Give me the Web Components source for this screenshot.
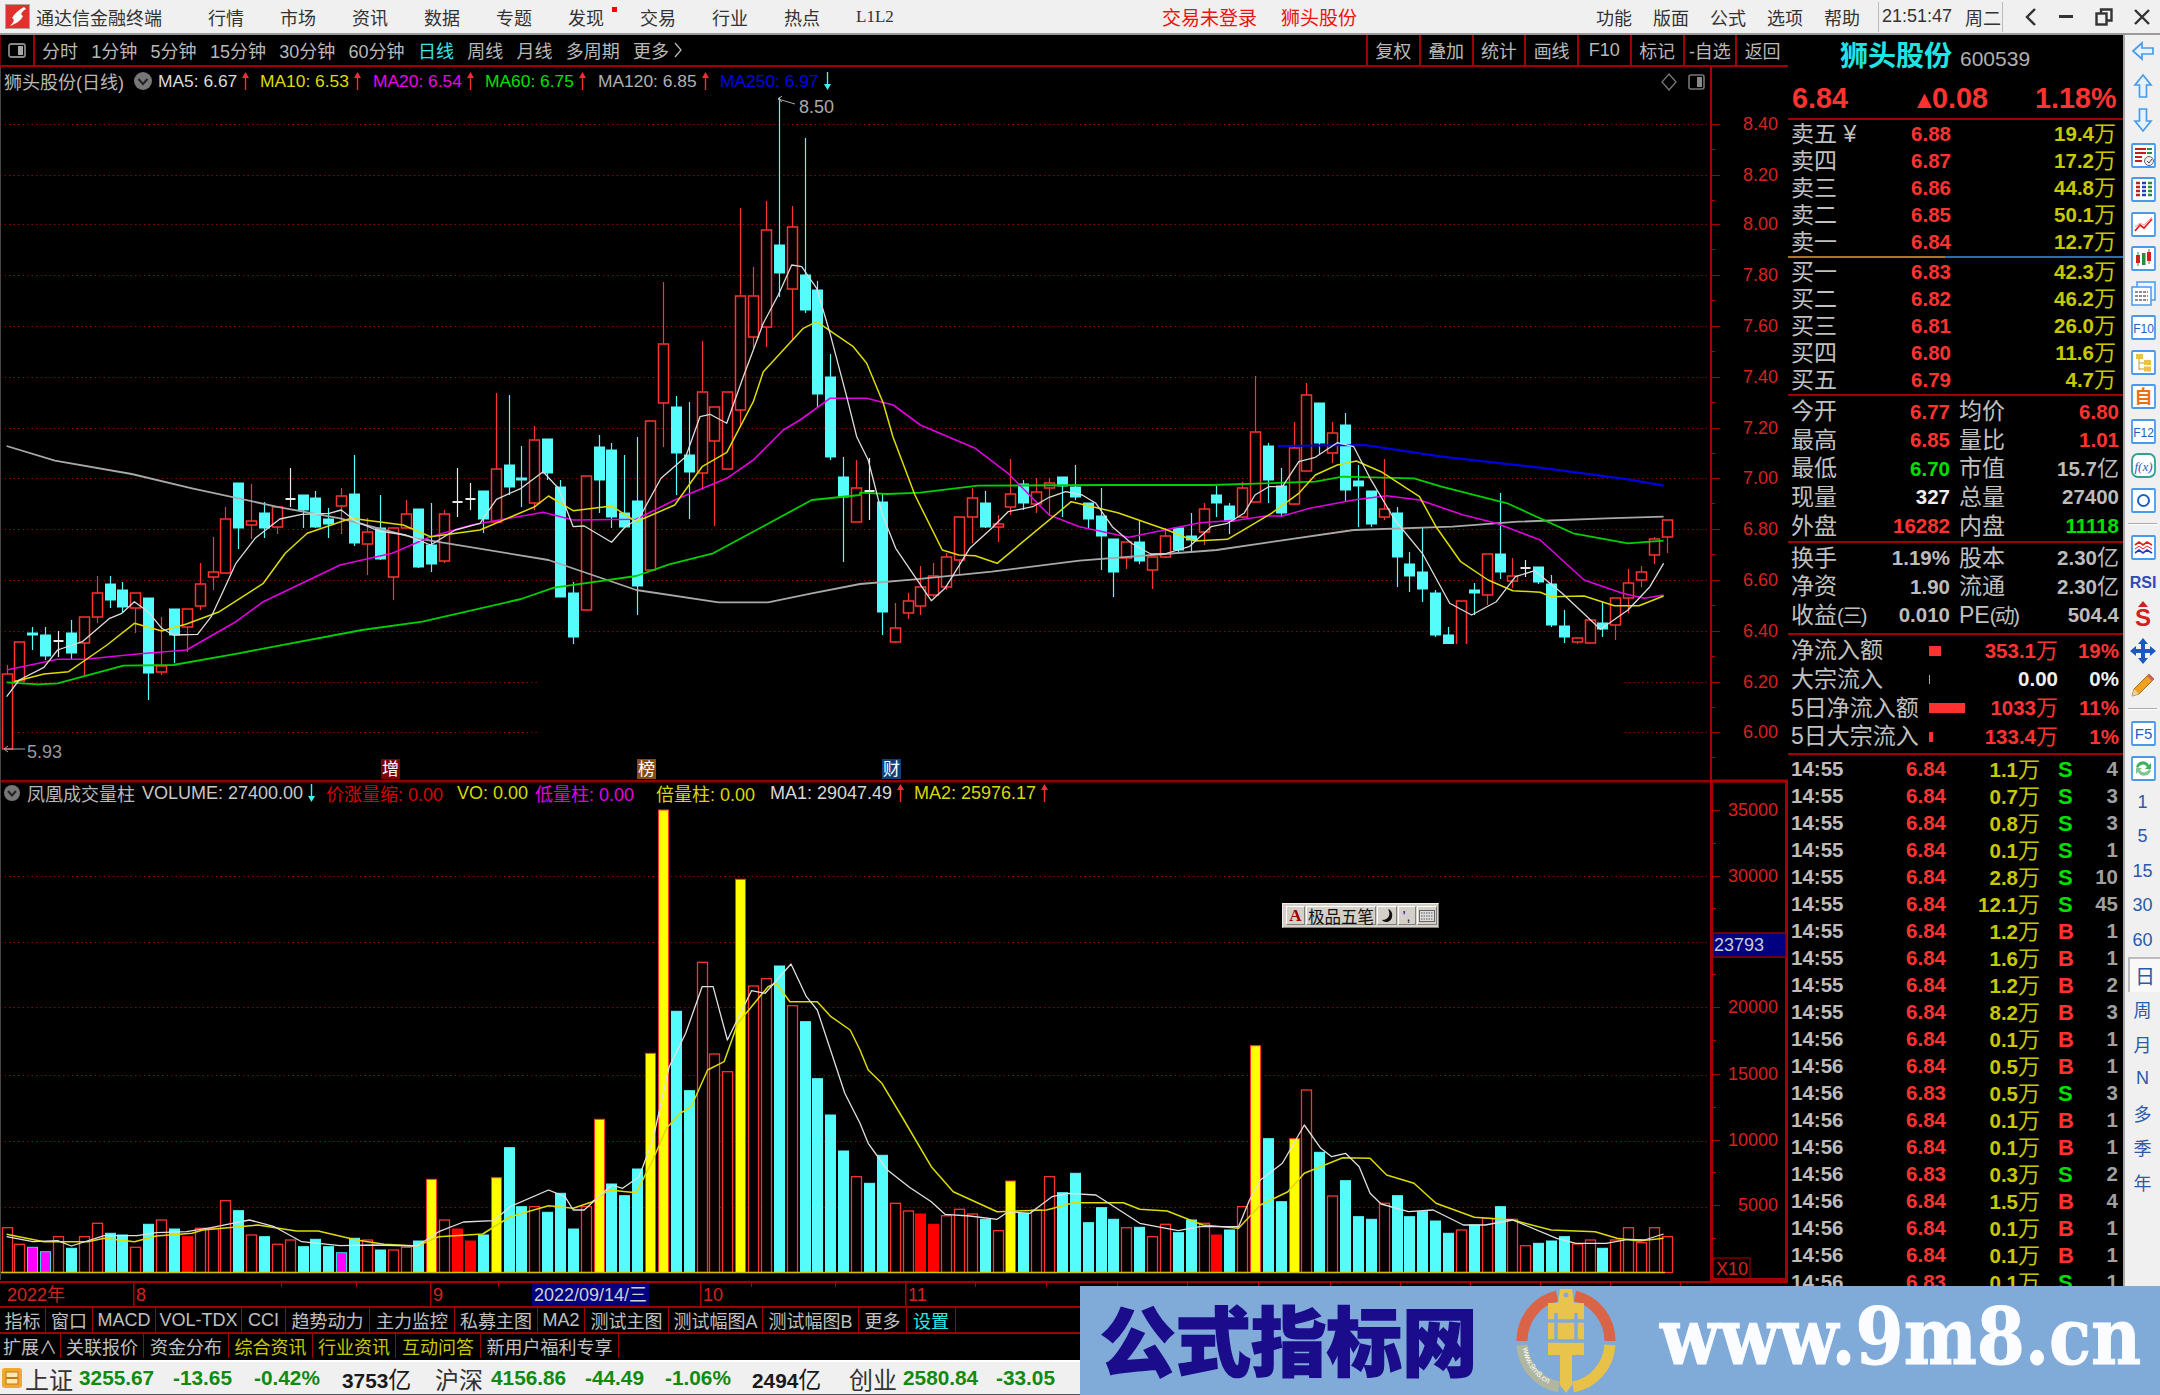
<!DOCTYPE html>
<html lang="zh"><head><meta charset="utf-8"><title>通达信金融终端</title>
<style>
html,body{margin:0;padding:0;background:#000;width:2160px;height:1395px;overflow:hidden;font-family:"Liberation Sans","Noto Sans CJK SC",sans-serif}
.shell{display:flex;flex-direction:column;width:2160px;height:1395px;position:relative}
.main{display:flex;height:1325px}
.left{display:flex;flex-direction:column;width:1788px}
</style></head><body>
<div class="shell">
<tdx-titlebar></tdx-titlebar>
<div class="main">
 <div class="left">
  <tdx-toolbar></tdx-toolbar>
  <kline-chart></kline-chart>
  <tab-bar>
   <tab-item w="46">指标</tab-item><tab-item w="47">窗口</tab-item><tab-item w="63">MACD</tab-item><tab-item w="86">VOL-TDX</tab-item><tab-item w="44">CCI</tab-item><tab-item w="84">趋势动力</tab-item><tab-item w="85">主力监控</tab-item><tab-item w="83">私募主图</tab-item><tab-item w="47">MA2</tab-item><tab-item w="84">测试主图</tab-item><tab-item w="94">测试幅图A</tab-item><tab-item w="96">测试幅图B</tab-item><tab-item w="48">更多</tab-item><tab-item w="49" tone="c">设置</tab-item>
  </tab-bar>
  <tab-bar>
   <tab-item w="61">扩展∧</tab-item><tab-item w="83">关联报价</tab-item><tab-item w="85">资金分布</tab-item><tab-item w="84" tone="y">综合资讯</tab-item><tab-item w="83" tone="y">行业资讯</tab-item><tab-item w="85" tone="y">互动问答</tab-item><tab-item w="138">新用户福利专享</tab-item>
  </tab-bar>
 </div>
 <quote-panel></quote-panel>
 <side-tools></side-tools>
</div>
<status-bar></status-bar>
<ime-bar></ime-bar>
<wm-banner></wm-banner>
</div>
<script>
const FF='"Liberation Sans","Noto Sans CJK SC",sans-serif';
function shadow(el,html){el.attachShadow({mode:'open'}).innerHTML=html;}

/* ---------- title bar ---------- */
customElements.define('tdx-titlebar',class extends HTMLElement{constructor(){super();
const nav=['行情','市场','资讯','数据','专题','发现','交易','行业','热点'].map(t=>`<span class="n">${t}${t=='发现'?'<i></i>':''}</span>`).join('');
const right=['功能','版面','公式','选项','帮助'].map(t=>`<span class="r">${t}</span>`).join('');
shadow(this,`<style>
:host{display:flex;align-items:center;box-sizing:border-box;height:35px;background:#f0f0f0;border-bottom:2px solid #9a9a9a;color:#333;font:18px ${FF};white-space:nowrap}
.logo{margin-left:5px;width:25px;height:25px;flex:none}
.title{margin-left:6px;width:172px;color:#333}
.n{width:72px;position:relative;flex:none}
.n i{position:absolute;left:44px;top:3px;width:5px;height:5px;background:#f00}
.l{font:17px "Liberation Serif",serif;width:72px}
.alert{color:#f01010;font-size:19px;flex:none}
.r{width:57px;flex:none}
.clock{flex:none;width:125px;box-sizing:border-box;height:30px;display:flex;align-items:center;border-left:1px solid #bbb;border-right:1px solid #bbb;margin-left:-3px;padding-left:3px;font-size:18px;color:#333}
.clock b{font-weight:400;margin-left:13px}
.win{display:flex;flex:none;width:157px;align-items:center;height:30px}
.win span{flex:none;display:flex;justify-content:center}
</style>
<svg class="logo" viewBox="0 0 25 25"><rect width="25" height="25" rx="1" fill="#e2302c"/><rect x=".5" y=".5" width="24" height="24" fill="none" stroke="#b0a0a0"/><path d="M19 3 L21 5 C16 8 15 11 18 12 C16 17 10 20 5 22 C9 18 10 15 7 14 C10 9 14 6 19 3Z" fill="#fff"/></svg>
<span class="title">通达信金融终端</span>${nav}<span class="n l">L1L2</span>
<span class="alert" style="margin-left:234px">交易未登录</span><span class="alert" style="margin-left:24px">狮头股份</span>
<span style="flex:1"></span>${right}
<span class="clock">21:51:47<b>周二</b></span>
<span class="win">
<span style="width:56px"><svg width="14" height="20" viewBox="0 0 14 20"><path d="M11 2 3 10l8 8" fill="none" stroke="#333" stroke-width="2.4"/></svg></span>
<span style="width:14px"><svg width="14" height="4"><rect width="14" height="3" fill="#333"/></svg></span>
<span style="width:62px"><svg width="18" height="18" viewBox="0 0 18 18" fill="none" stroke="#333" stroke-width="2.4"><rect x="1.5" y="5.5" width="10" height="11"/><path d="M6 5V1.5h10.500v11H12"/></svg></span>
<span style="width:14px"><svg width="16" height="16" viewBox="0 0 16 16" style="flex:none"><path d="M1 1l14 14M15 1 1 15" stroke="#333" stroke-width="2.400"/></svg></span>
</span>`);}});

/* ---------- toolbar ---------- */
customElements.define('tdx-toolbar',class extends HTMLElement{constructor(){super();
const left=['分时','1分钟','5分钟','15分钟','30分钟','60分钟','日线','周线','月线','多周期','更多'].map(t=>`<span class="${t=='日线'?'on':''}">${t}</span>`).join('');
const right=['复权','叠加','统计','画线','F10','标记','-自选','返回'].map(t=>`<span class="b">${t}</span>`).join('');
shadow(this,`<style>
:host{display:flex;align-items:stretch;box-sizing:border-box;height:32px;background:#000;border-bottom:2px solid #a00000;color:#b8b8b8;font:18px ${FF};white-space:nowrap}
.ic{width:35px;box-sizing:border-box;border-right:2px solid #a00000;border-left:1px solid #700;display:flex;align-items:center;justify-content:center;flex:none}
.l{display:flex;gap:13.300px;align-items:center;margin-left:7px}
.on{color:#30e8e8}
.b{width:52.750px;flex:none;box-sizing:border-box;border-left:2px solid #a00000;display:flex;align-items:center;justify-content:center}
.sp{flex:1}
</style>
<span class="ic"><svg width="18" height="15" viewBox="0 0 18 15"><rect x="1" y="1" width="16" height="13" rx="2" fill="none" stroke="#888" stroke-width="1.800"/><rect x="10" y="3" width="5" height="9" fill="#aaa"/></svg></span>
<span class="l">${left}<svg width="9" height="16" viewBox="0 0 9 16" style="margin-left:-8px"><path d="M1 1l6 7-6 7" fill="none" stroke="#b8b8b8" stroke-width="1.300"/></svg></span>
<span class="sp"></span>${right}`);}});

/* ---------- legend item ---------- */
customElements.define('legend-item',class extends HTMLElement{constructor(){super();
const a=this.getAttribute('arrow');const w=this.getAttribute('w');
if(w)this.style.width=w+'px';
const svg=a=='up'?`<svg width="9" height="18" viewBox="0 0 9 18"><path d="M4.500 0 8 6H5.200v12H3.800V6H1z" fill="#f03030"/></svg>`:a=='down'?`<svg width="9" height="18" viewBox="0 0 9 18"><path d="M3.800 0h1.400v12H8l-3.500 6L1 12h2.800z" fill="#40f0f0"/></svg>`:'';
shadow(this,`<style>:host{display:inline-flex;flex:none;align-items:center;gap:4px;white-space:nowrap;box-sizing:border-box}</style><slot></slot>${svg}`);}});

/* ---------- chart ---------- */
const C=[['r',665,674,749,749],['r',642,642,681,681],['c',627,633,635,650],['c',627,635,656,660],['w',631,640,642,657],['c',620,633,653,659],['r',617,617,643,675],['r',576,593,617,623],['c',576,584,600,608],['c',582,590,607,613],['r',593,593,608,633],['c',598,598,673,700],['r',617,666,672,675],['c',609,609,635,663],['r',609,609,627,652],['r',563,584,606,610],['r',537,572,577,590],['r',507,519,573,573],['c',483,483,528,549],['r',484,521,525,539],['c',502,513,528,538],['r',507,507,527,534],['w',468,498,500,507],['c',495,495,510,528],['c',491,498,527,528],['c',508,519,524,538],['r',488,496,506,534],['c',455,494,543,546],['r',518,532,544,575],['c',495,528,559,560],['r',528,528,577,600],['r',500,514,528,528],['c',509,509,567,568],['c',503,545,564,572],['r',510,514,561,563],['w',468,501,503,517],['w',483,498,500,510],['c',491,491,519,533],['r',393,469,522,522],['c',395,465,487,495],['c',446,478,480,507],['r',426,440,503,510],['c',439,439,473,480],['c',480,487,597,597],['c',582,593,637,644],['r',476,476,610,610],['c',435,447,480,513],['c',443,450,517,528],['c',455,513,527,528],['c',437,501,586,615],['r',421,421,570,570],['r',282,344,403,447],['c',396,407,453,495],['c',402,455,472,519],['r',341,392,473,490],['r',407,407,441,526],['r',392,392,469,469],['r',208,296,410,425],['r',267,296,337,348],['r',201,230,327,347],['c',97,245,273,297],['r',206,227,289,340],['c',138,275,310,313],['c',281,290,394,408],['c',354,377,457,460],['c',457,477,497,562],['r',460,488,522,522],['w',458,490,492,520],['c',493,502,612,635],['r',603,628,642,643],['r',593,601,613,619],['r',566,587,606,615],['r',563,576,595,597],['r',553,557,587,590],['r',517,517,560,575],['r',488,498,517,543],['c',491,503,527,528],['r',515,524,527,542],['r',459,494,507,515],['c',480,484,503,510],['r',478,492,504,513],['r',478,483,488,515],['c',477,477,486,517],['c',465,487,497,500],['c',503,503,519,528],['c',488,516,536,570],['c',539,539,572,597],['r',542,542,558,569],['c',520,542,561,564],['r',557,557,570,589],['r',528,536,557,558],['c',528,528,550,553],['c',513,536,540,552],['r',503,509,532,545],['c',486,495,503,517],['c',503,506,521,534],['r',482,488,517,518],['r',376,432,502,502],['c',443,446,480,503],['c',468,486,513,517],['r',422,448,504,505],['r',383,395,471,471],['c',403,403,443,454],['r',422,433,453,463],['c',413,425,490,501],['c',465,481,486,527],['c',491,491,524,527],['r',459,509,517,520],['c',507,513,557,587],['c',552,564,576,592],['c',528,572,589,602],['c',590,593,635,637],['c',627,635,647,647],['r',601,601,647,647],['c',583,590,593,615],['r',554,554,595,605],['c',493,554,572,579],['r',558,576,581,588],['w',560,567,569,577],['c',567,567,582,584],['c',575,584,625,627],['c',610,626,637,643],['r',637,638,642,644],['r',620,620,643,643],['c',602,623,629,637],['r',598,598,625,640],['r',569,583,598,613],['r',566,572,580,587],['r',537,539,555,564],['r',520,520,537,553]];
const V=[['r',1283],['r',1333],['m',1342],['m',1355],['r',1310],['c',1345],['r',1310],['r',1270],['c',1300],['c',1305],['r',1342],['c',1273],['r',1260],['c',1287],['R',1310],['r',1285],['r',1285],['r',1202],['c',1232],['r',1305],['c',1310],['r',1333],['r',1320],['c',1340],['c',1318],['c',1340],['m',1358],['c',1315],['r',1320],['c',1350],['r',1350],['r',1342],['c',1323],['y',1138],['r',1260],['R',1287],['R',1323],['c',1305],['y',1133],['c',1043],['c',1220],['r',1220],['c',1237],['c',1180],['c',1287],['r',1220],['y',958],['c',1152],['c',1187],['c',1107],['y',760],['y',30],['c',634],['c',872],['r',487],['r',762],['r',815],['y',238],['r',558],['r',536],['c',498],['r',617],['c',665],['c',836],['c',945],['c',1053],['r',1130]].map(([t,z])=>[t,800+z/3]).concat([['c',910],['c',826],['r',970],['r',993],['R',1002],['R',1033],['r',1007],['r',988],['r',1002],['c',1018],['r',1052],['y',903],['c',1000],['r',990],['r',890],['c',938],['c',880],['c',1028],['c',983],['c',1018],['r',1043],['c',1042],['r',1070],['r',1033],['c',1058],['c',1020],['r',1030],['R',1065],['c',1050],['r',980],['y',497],['c',776],['c',965],['y',776],['r',630],['c',817],['r',948],['c',902],['c',1010],['c',1018],['r',970],['c',947],['c',1010],['c',995],['c',1023],['c',1060],['r',1050],['c',1035],['r',1015],['c',980],['r',1018],['r',1097],['c',1090],['c',1083],['c',1070],['r',1092],['r',1080],['c',1105],['r',1080],['r',1043],['r',1088],['r',1043],['r',1070]].map(([t,z])=>[t,880+z/3]));
const map=(a,fx,fy)=>{const o=[];for(let i=0;i<a.length;i+=2)o.push([fx(a[i]),fy(a[i+1])]);return o};
const z8=a=>map(a,x=>x/1.823,y=>420+y/3), z12=a=>map(a,x=>600+x/3,y=>80+y/3), z9=a=>map(a,x=>860+x/1.823,y=>380+y/3), z10=a=>map(a,x=>x/1.823,y=>800+y/3), z11=a=>map(a,x=>860+x/1.823,y=>880+y/3);
const MA5=[...z8([12,830,35,780,80,742,105,690,150,665,200,595,222,580,245,545,270,575,295,625,316,645,360,643,385,590,405,520,430,430,465,355,510,297,550,283,600,280,622,270,650,305,690,333,740,345,785,375,830,330,875,310,905,238,950,205,990,155,1018,205,1045,320,1065,318,1115,367,1140,320,1165,295,1205,175,1250,110]),...z12([300,1010,330,1003,380,1030,430,890,490,730,535,645,575,555,605,560,650,625,690,760,740,950,770,1070]),...z9([15,240,40,400,65,505,100,590,130,662,155,625,200,505,240,445,270,395,315,380,345,352,375,335,405,345,430,370,460,440,495,490,530,522,555,522,600,500,640,440,670,430,700,400,720,345,745,320,770,320,800,245,830,232,870,188,900,200,930,295,975,420,1025,520,1075,670,1115,705,1160,665,1195,590,1230,572,1280,640,1350,748,1400,690,1440,620,1465,550])];
const MA10=[...z8([25,785,80,762,125,755,195,675,245,610,295,633,340,612,400,575,480,490,520,400,560,340,640,295,735,315,785,350,875,330,975,260,1000,228,1045,272,1115,258,1160,305,1230,255,1280,140,1325,97]),...z12([460,965,490,875,550,810,610,745,650,725,760,800,800,850,850,970]),...z9([60,170,100,345,150,510,180,525,210,527,250,550,385,365,470,398,560,450,610,483,670,478,750,400,800,340,830,285,870,255,905,243,950,275,1020,350,1050,440,1095,545,1145,600,1190,632,1240,637,1260,650,1320,648,1375,677,1420,677,1465,648])];
const MA20=[...z8([12,750,105,718,155,718,245,703,340,690,430,605,480,545,620,435,715,400,785,350,860,315,990,277,1045,300,1160,298,1230,240,1325,175]),...z12([460,1140,550,1050,600,1020,690,955,800,955,880,975]),...z9([110,135,210,205,270,280,345,405,400,440,490,472,620,428,690,420,740,408,770,408,820,385,900,360,960,347,1020,360,1100,405,1160,430,1240,480,1320,600,1390,640,1430,655,1465,645])];
const MA60=[...z8([12,787,70,793,105,790,225,737,316,735,435,700,660,630,770,605,950,537,1010,503,1160,468,1220,433,1300,400,1390,320,1480,240,1568,225]),...z9([0,338,50,342,110,338,215,317,450,315,640,315,830,305,880,290,1010,295,1060,320,1180,370,1300,460,1400,490,1465,482])];
const MA120=[...z8([12,78,100,122,240,162,350,205,510,262,620,295,760,355,1000,420,1160,510,1310,547,1400,547,1480,520,1568,492]),...z9([100,598,240,575,400,542,650,510,900,450,1080,440,1200,425,1360,415,1465,410])];
const MA250=z9([762,198,920,195,1060,230,1250,265,1400,298,1465,317]);
const VM1=[...z10([12,1310,60,1325,105,1322,130,1338,190,1307,250,1307,285,1298,340,1295,385,1283,430,1268,455,1260,500,1280,550,1325,620,1337,680,1335,760,1338,800,1295,845,1266,900,1262,930,1220,1000,1170,1030,1190,1045,1230,1065,1230,1115,1155,1135,1165,1165,1130,1190,1020,1220,800,1250,700,1280,560,1300,560,1326,720,1370,572,1395,580,1442,492,1470,590,1490,630,1540,880]),...z11([0,730,15,790,50,870,90,922,130,965,155,1003,200,1008,250,1018,270,995,310,1000,350,950,380,940,430,945,510,1030,580,1052,620,1040,690,1040,710,960,730,900,770,850,810,735,840,805,860,830,885,820,910,860,930,940,950,972,1000,995,1045,990,1100,1035,1140,1035,1190,1020,1270,1075,1305,1090,1360,1090,1400,1078,1430,1080,1465,1062])];
const VM2=[...z10([12,1303,80,1325,160,1325,190,1315,245,1325,285,1308,350,1300,370,1290,470,1275,540,1293,580,1293,650,1320,700,1333,760,1338,800,1310,880,1302,930,1250,1000,1217,1045,1225,1080,1205,1110,1170,1160,1178,1190,1080,1215,985,1240,940,1260,920,1290,810,1320,785,1345,670,1400,560,1415,550,1440,605,1490,605,1515,650,1550,690]),...z11([0,510,15,570,40,610,80,720,130,860,170,935,250,995,340,990,390,968,480,968,510,988,560,993,625,1035,690,1045,730,975,780,935,810,880,880,833,930,835,960,885,1010,910,1050,970,1120,1012,1190,1020,1260,1050,1340,1055,1380,1075,1420,1083,1465,1075])];
const CY='#54fcfc',RD='#ff3232';
const cx=i=>Math.round(6.6+12.87*i)+.5;
function buildChart(){
 let s='';
 const AX='#a80000',DOT='#8a0000';
 const pg=[124,175,224,275,326,377,428,478,529,580,631,682,732];
 const pl=['8.40','8.20','8.00','7.80','7.60','7.40','7.20','7.00','6.80','6.60','6.40','6.20','6.00'];
 pg.forEach(y=>s+=`<line x1="0" x2="1711" y1="${y}.5" y2="${y}.5" stroke="${DOT}" stroke-dasharray="1.500 3"/>`);
 const vg=[876,942,1007,1075,1141,1207];
 vg.forEach(y=>s+=`<line x1="0" x2="1711" y1="${y}.5" y2="${y}.5" stroke="${DOT}" stroke-dasharray="1.500 3"/>`);
 C.forEach((c,i)=>{const x=cx(i),[t,wt,bt,bb,wb]=c;
  const col=t=='c'?CY:t=='r'?RD:'#e8e8e8';
  s+=`<line x1="${x}" x2="${x}" y1="${wt}" y2="${wb}" stroke="${col}" stroke-width="1.200"/>`;
  if(t=='w')s+=`<line x1="${x-5}" x2="${x+5}" y1="${(bt+bb)/2}" y2="${(bt+bb)/2}" stroke="${col}" stroke-width="2"/>`;
  else s+=`<rect x="${x-5}" y="${bt}" width="10" height="${Math.max(bb-bt,1)}" fill="${t=='c'?CY:'#000'}" stroke="${col}" stroke-width="${t=='c'?1:1.500}"/>`;
 });
 const line=(p,c,w)=>`<polyline points="${p.map(q=>q[0].toFixed(1)+','+q[1].toFixed(1)).join(' ')}" fill="none" stroke="${c}" stroke-width="${w}" stroke-linejoin="round"/>`;
 s+=line(MA120,'#a8a8a8',1.800)+line(MA250,'#0000e0',2.200)+line(MA60,'#00d000',1.800)+line(MA20,'#e000e0',1.600)+line(MA10,'#dcdc00',1.500)+line(MA5,'#dcdcdc',1.300);
 s+=`<rect x="537" y="644" width="1084" height="134" fill="#000"/>`;
 s+=`<path d="M778 99l17 5M778 99l4 -3M778 99l4 3" stroke="#aaa" fill="none"/><text x="799" y="107" fill="#aaa" font-size="18" dominant-baseline="central">8.50</text>`;
 s+=`<path d="M25 749H4M4 749l4-3M4 749l4 3" stroke="#aaa" fill="none"/><text x="27" y="752" fill="#999" font-size="18" dominant-baseline="central">5.93</text>`;
 [[381,'增','#7d0000'],[637,'榜','#8a4a10'],[882,'财','#0f3f78']].forEach(([x,t,b])=>s+=`<rect x="${x}" y="759" width="19" height="20" fill="${b}"/><text x="${x+9.500}" y="769" fill="#fff" font-size="17" text-anchor="middle" dominant-baseline="central">${t}</text>`);
 s+=`<path d="M1669 74l7 8-7 8-7-8z" fill="none" stroke="#777" stroke-width="1.300"/><rect x="1689" y="75" width="15" height="14" rx="2" fill="none" stroke="#777" stroke-width="1.600"/><rect x="1697" y="77" width="5" height="10" fill="#888"/>`;
 V.forEach((b,i)=>{const x=cx(i),[t,y]=b,h=1272.5-y;
  const fill={r:'#000',c:CY,y:'#ffff00',m:'#ff00ff',R:'#ff0000'}[t];
  const st={r:RD,c:CY,y:RD,m:'#30e0e0',R:'#ff0000'}[t];
  s+=`<rect x="${x-5}" y="${y.toFixed(1)}" width="10" height="${h.toFixed(1)}" fill="${fill}" stroke="${st}" stroke-width="${t=='r'?1.300:1}"/>`;
 });
 s+=`<line x1="0" x2="1665" y1="1272.500" y2="1272.500" stroke="#d0c000" stroke-width="1.600"/>`;
 s+=line(VM2,'#dcdc00',1.500)+line(VM1,'#e0e0e0',1.300);
 s+=`<rect x="0" y="780" width="1788" height="2.500" fill="#900000"/><line x1="0.500" x2="0.500" y1="67" y2="1280" stroke="#444"/>`;
 s+=`<rect x="1710" y="67" width="2" height="1215" fill="${AX}"/>`;
 pg.forEach((y,i)=>{s+=`<rect x="1712" y="${y}" width="8" height="1" fill="${AX}"/><rect x="1712" y="${y+25}" width="3" height="1" fill="${AX}"/><text x="1778" y="${y}" fill="#d82020" font-size="18" text-anchor="end" dominant-baseline="central">${pl[i]}</text>`;});
 [[810,'35000'],[876,'30000'],[1007,'20000'],[1074,'15000'],[1140,'10000'],[1205,'5000']].forEach(([y,t])=>s+=`<rect x="1713" y="${y}" width="7" height="1" fill="${AX}"/><text x="1778" y="${y}" fill="#d82020" font-size="18" text-anchor="end" dominant-baseline="central">${t}</text>`);
 [843,908,974,1040,1107,1172,1238].forEach(y=>s+=`<rect x="1713" y="${y}" width="3" height="1" fill="${AX}"/>`);
 s+=`<rect x="1711.500" y="781" width="75" height="498.500" fill="none" stroke="${AX}" stroke-width="3"/>`;
 s+=`<rect x="1713" y="933" width="73" height="24" fill="#000080" stroke="#900000" stroke-width="1.500"/><text x="1714" y="945" fill="#ccc" font-size="18" dominant-baseline="central">23793</text>`;
 s+=`<rect x="1713" y="1258" width="37" height="21" fill="none" stroke="${AX}"/><text x="1716" y="1268.500" fill="#d82020" font-size="18" dominant-baseline="central">X10</text>`;
 s+=`<rect x="0" y="1281" width="1788" height="2" fill="${AX}"/>`;
 [133,281,356,430,498,700,751,835,905,975,1046,1117,1187,1258,1330,1400,1470,1540,1610,1680].forEach(x=>s+=`<rect x="${x}" y="1283" width="1" height="4" fill="${AX}"/>`);
 [133,430,700,905].forEach(x=>s+=`<rect x="${x}" y="1283" width="1.500" height="23" fill="${AX}"/>`);
 const dt=(x,t)=>`<text x="${x}" y="1295" fill="#d82020" font-size="18" dominant-baseline="central">${t}</text>`;
 s+=dt(7,'2022年')+dt(136,'8')+dt(433,'9')+dt(703,'10')+dt(908,'11');
 s+=`<rect x="532" y="1283" width="117" height="23" fill="#000080"/><text x="590.500" y="1295" fill="#d0d0d0" font-size="18" text-anchor="middle" dominant-baseline="central">2022/09/14/三</text>`;
 return s;
}
customElements.define('kline-chart',class extends HTMLElement{constructor(){super();
shadow(this,`<style>
:host{display:block;position:relative;width:1788px;height:1239px;flex:none;background:#000;font-family:${FF}}
svg{display:block;font-family:${FF}}
.lg{position:absolute;left:0;display:flex;align-items:center;height:18px;white-space:nowrap}
.a{top:5px;font-size:17.400px;color:#c8c8c8}
.b{top:717px;font-size:18px;color:#c8c8c8}
.ci{flex:none}
</style>
<svg width="1788" height="1239" viewBox="0 67 1788 1239">${buildChart()}</svg>
<div class="lg a"><span style="width:134px;padding-left:4px;box-sizing:border-box;color:#b8b8b8;font-size:18px">狮头股份(日线)</span>
<svg class="ci" width="24" height="18" viewBox="0 0 24 18"><circle cx="9" cy="9" r="9" fill="#777"/><path d="M4.500 7l4.500 5 4.500-5" fill="none" stroke="#222" stroke-width="2"/></svg>
<legend-item w="102" arrow="up" style="color:#dcdcdc">MA5: 6.67</legend-item>
<legend-item w="113" arrow="up" style="color:#dcdc00">MA10: 6.53</legend-item>
<legend-item w="112" arrow="up" style="color:#ee00ee">MA20: 6.54</legend-item>
<legend-item w="113" arrow="up" style="color:#00e000">MA60: 6.75</legend-item>
<legend-item w="122" arrow="up" style="color:#b0b0b0">MA120: 6.85</legend-item>
<legend-item arrow="down" style="color:#0000e8">MA250: 6.97</legend-item></div>
<div class="lg b"><svg class="ci" width="27" height="18" viewBox="0 0 27 18"><circle cx="12" cy="9" r="8" fill="#777"/><path d="M8 7l4 4.500L16 7" fill="none" stroke="#222" stroke-width="2"/></svg>
<span style="width:115px;color:#b8b8b8">凤凰成交量柱</span>
<legend-item w="184" arrow="down" style="color:#c8c8c8">VOLUME: 27400.00</legend-item>
<legend-item w="131" style="color:#d80000">价涨量缩: 0.00</legend-item>
<legend-item w="78" style="color:#d8d800">VO: 0.00</legend-item>
<legend-item w="121" style="color:#e000e0">低量柱: 0.00</legend-item>
<legend-item w="114" style="color:#d8d800">倍量柱: 0.00</legend-item>
<legend-item w="144" arrow="up" style="color:#d8d8d8">MA1: 29047.49</legend-item>
<legend-item arrow="up" style="color:#d8d800">MA2: 25976.17</legend-item></div>`);}});

/* ---------- tabs ---------- */
customElements.define('tab-bar',class extends HTMLElement{constructor(){super();
shadow(this,`<style>:host{display:flex;box-sizing:border-box;height:26px;flex:none;background:#000;border-top:2px solid #a00000;color:#c0c0c0;font:18px ${FF}}</style><slot></slot>`);}});
customElements.define('tab-item',class extends HTMLElement{constructor(){super();
this.style.width=this.getAttribute('w')+'px';
shadow(this,`<style>:host{display:flex;flex:none;box-sizing:border-box;align-items:center;justify-content:center;border-right:1.500px solid #a00000;white-space:nowrap;overflow:hidden;color:#c0c0c0}
:host([tone=y]){color:#c8c800}:host([tone=c]){color:#30e8e8}</style><slot></slot>`);}});

/* ---------- quote panel ---------- */
const wan=s=>s.replace(/([万亿])/g,'<u>$1</u>');
customElements.define('quote-panel',class extends HTMLElement{constructor(){super();
const bk=(n,p,q)=>`<div class="bk"><span class="lb">${n}</span><span class="red v">${p}</span><span class="yl v">${wan(q)}</span></div>`;
const sell=[['卖五 <s>¥</s>','6.88','19.4万'],['卖四','6.87','17.2万'],['卖三','6.86','44.8万'],['卖二','6.85','50.1万'],['卖一','6.84','12.7万']].map(a=>bk(...a)).join('');
const buy=[['买一','6.83','42.3万'],['买二','6.82','46.2万'],['买三','6.81','26.0万'],['买四','6.80','11.6万'],['买五','6.79','4.7万']].map(a=>bk(...a)).join('');
const st=(a,b,bc,c,d,dc)=>`<div class="st"><span class="lb">${a}</span><span class="v ${bc}">${wan(b)}</span><span></span><span class="lb">${c}</span><span class="v ${dc}">${wan(d)}</span></div>`;
const stats=[['今开','6.77','red','均价','6.80','red'],['最高','6.85','red','量比','1.01','red'],['最低','6.70','grn','市值','15.7亿','gy'],['现量','327','wh','总量','27400','gy'],['外盘','16282','red','内盘','11118','grn']].map(a=>st(...a)).join('');
const fin=[['换手','1.19%','gy','股本','2.30亿','gy'],['净资','1.90','gy','流通','2.30亿','gy'],['收益<small>(三)</small>','0.010','gy','PE<small>(动)</small>','504.4','gy']].map(a=>st(...a)).join('');
const fl=(a,w,h,v,c,p)=>`<div class="fl"><span class="lb">${a}</span><span><i style="width:${w}px;height:${h}px;background:${w<2?'#aaa':'#ff3030'}"></i></span><span class="v ${c}">${wan(v)}</span><span class="v ${c}">${p}</span></div>`;
const flow=[['净流入额',12,10,'353.1万','red','19%'],['大宗流入',1,9,'0.00','wh','0%'],['5日净流入额',36,10,'1033万','red','11%'],['5日大宗流入',4,10,'133.4万','red','1%']].map(a=>fl(...a)).join('');
const T=`14:55 6.84 1.1 S 4|14:55 6.84 0.7 S 3|14:55 6.84 0.8 S 3|14:55 6.84 0.1 S 1|14:55 6.84 2.8 S 10|14:55 6.84 12.1 S 45|14:55 6.84 1.2 B 1|14:55 6.84 1.6 B 1|14:55 6.84 1.2 B 2|14:55 6.84 8.2 B 3|14:56 6.84 0.1 B 1|14:56 6.84 0.5 B 1|14:56 6.83 0.5 S 3|14:56 6.84 0.1 B 1|14:56 6.84 0.1 B 1|14:56 6.83 0.3 S 2|14:56 6.84 1.5 B 4|14:56 6.84 0.1 B 1|14:56 6.84 0.1 B 1|14:56 6.83 0.1 S 1`;
const ticks=T.split('|').map(r=>{const [t,p,q,d,n]=r.split(' ');return `<div class="tk"><span class="gy">${t}</span><span class="red v">${p}</span><span class="yl v">${q}<u>万</u></span><span class="${d=='S'?'grn':'red'} bs">${d}</span><span class="v dim">${n}</span></div>`}).join('');
shadow(this,`<style>
:host{display:flex;flex-direction:column;width:335px;height:1325px;flex:none;box-sizing:border-box;background:#000;overflow:hidden;color:#c0c0c0;font:bold 20.500px/1 ${FF}}
.lb{font-weight:400;font-size:23px;color:#c0c0c0;white-space:nowrap}
.lb s{text-decoration:none;font-size:23px;font-weight:400}
.lb small{font-size:20px;font-weight:400;letter-spacing:-1.500px}
u{text-decoration:none;font-weight:400;font-size:22px}
.v{text-align:right;white-space:nowrap}
.red{color:#ff3232}.grn{color:#00e000}.yl{color:#c8c800}.gy{color:#bcbcbc}.wh{color:#f0f0f0}.dim{color:#a0a0a0}
.title{height:43px;flex:none;display:flex;align-items:center;padding-left:52px}
.title b{font-size:28px;color:#20e4e4;font-weight:700;white-space:nowrap}
.title span{font-weight:400;font-size:21px;color:#b0b0b0;margin-left:8px;margin-top:3px}
.px{height:40px;flex:none;display:grid;grid-template-columns:120px 123px 81px;padding-left:4px;align-items:center;color:#ff3232;font-size:28.800px;border-bottom:2px solid #a00000;box-sizing:content-box}
.px em{font-style:normal;font-size:25px;display:inline-block;width:20px;text-align:center}
.sec{flex:none;display:flex;flex-direction:column;padding-left:3px;box-sizing:border-box}
.bk{display:grid;grid-template-columns:120px 40px 1fr;height:27px;flex:none;align-items:center;padding-right:7px}
.l1{height:135.500px;padding-top:.5px}.d1{height:2.500px;flex:none;background:linear-gradient(90deg,#a87820 0 157px,#2870a8 157px)}
.l2{height:137.500px;padding-top:.5px;border-bottom:2px solid #a00000}
.st{display:grid;grid-template-columns:60px 99px 9px 60px 1fr;height:28.600px;flex:none;align-items:center;padding-right:4px}
.l3{height:147px;padding-top:2px;border-bottom:2px solid #a00000}
.l4{height:92.500px;padding-top:1.500px;border-bottom:2px solid #a00000}
.fl{display:grid;grid-template-columns:138px 40px 89px 61px;height:28.700px;flex:none;align-items:center}
.fl i{display:block}
.l5{height:120px;padding-top:1.500px;border-bottom:2px solid #a00000}
.tk{display:grid;grid-template-columns:60px 95px 94px 40px 38px;height:27px;flex:none;align-items:center}
.bs{padding-left:18px;font-size:22px}
</style>
<div class="title"><b>狮头股份</b><span>600539</span></div>
<div class="px"><span>6.84</span><span><em>▲</em>0.08</span><span class="v">1.18%</span></div>
<div class="sec l1">${sell}</div><div class="d1"></div>
<div class="sec l2">${buy}</div>
<div class="sec l3">${stats}</div>
<div class="sec l4">${fin}</div>
<div class="sec l5">${flow}</div>
<div class="sec" style="padding-top:1px">${ticks}</div>`);}});

/* ---------- side tools ---------- */
const FR=(inner,c='#4a9ae8')=>`<svg width="28" height="28" viewBox="0 0 28 28"><rect x="3" y="3" width="23" height="23" rx="1" fill="#fff" stroke="${c}" stroke-width="1.800"/>${inner}</svg>`;
const ICONS=[
`<svg width="24" height="20" viewBox="0 0 24 20"><path d="M2 10 11 2v5h11v6H11v5z" fill="#e6f3ff" stroke="#4a9ae8" stroke-width="1.700"/></svg>`,
`<svg width="20" height="26" viewBox="0 0 20 26"><path d="M10 2l8 10h-4.500v12h-7V12H2z" fill="#e6f3ff" stroke="#4a9ae8" stroke-width="1.700"/></svg>`,
`<svg width="20" height="26" viewBox="0 0 20 26"><path d="M10 24l8-10h-4.500V2h-7v12H2z" fill="#e6f3ff" stroke="#4a9ae8" stroke-width="1.700"/></svg>`,
FR(`<path d="M6 8h11M6 12h11M6 16h7M6 20h7" stroke="#c02020" stroke-width="2"/><path d="M18 8h5M18 12h5" stroke="#209040" stroke-width="2"/><circle cx="20" cy="20" r="4.500" fill="#eee" stroke="#666"/><path d="M18 20l2 2 3-4" stroke="#444" fill="none"/>`),
FR(`<path d="M7 8h4M7 12h4M7 16h4M7 20h4" stroke="#c02020" stroke-width="2.400"/><path d="M13 8h4M13 12h4M13 16h4M13 20h4" stroke="#2040c0" stroke-width="2.400"/><path d="M19 8h4M19 12h4M19 16h4M19 20h4" stroke="#209040" stroke-width="2.400"/>`),
FR(`<path d="M6 21l5-6 4 3 8-9" stroke="#e02020" stroke-width="1.800" fill="none"/><path d="M6 17l5-4 4 2 8-8" stroke="#e8a0a0" fill="none"/>`),
FR(`<path d="M9 8v14M20 5v15" stroke="#209040"/><rect x="7" y="11" width="4" height="8" fill="#d02020"/><rect x="13" y="9" width="3.500" height="12" fill="#209040"/><rect x="18" y="8" width="4" height="9" fill="#d02020"/>`),
`<svg width="28" height="28" viewBox="0 0 28 28"><rect x="8" y="3" width="18" height="18" fill="#eef5ff" stroke="#4a9ae8" stroke-width="1.500"/><rect x="3" y="8" width="19" height="18" fill="#fff" stroke="#4a9ae8" stroke-width="1.500"/><path d="M6 13h13M6 17h13M6 21h13" stroke="#667" stroke-dasharray="3 1" stroke-width="1.500"/></svg>`,
FR(`<text x="14.500" y="19.500" text-anchor="middle" font-size="12" fill="#2060c0" font-family="Liberation Sans">F10</text>`),
FR(`<path d="M10 9v13M10 15h6M10 21h6" stroke="#c0a030" fill="none"/><rect x="7" y="6" width="7" height="5" fill="#f0c040"/><rect x="15" y="12" width="7" height="5" fill="#f0c040"/><rect x="15" y="18.500" width="7" height="5" fill="#f0c040"/>`),
FR(`<text x="14.500" y="21" text-anchor="middle" font-size="18" font-weight="700" fill="#f07010">自</text>`),
FR(`<text x="14.500" y="19.500" text-anchor="middle" font-size="12" fill="#2060c0" font-family="Liberation Sans">F12</text>`),
`<svg width="28" height="28" viewBox="0 0 28 28"><rect x="3" y="3" width="23" height="23" rx="6" fill="#fff" stroke="#30a090" stroke-width="1.800"/><text x="14.500" y="19.500" text-anchor="middle" font-size="13" font-style="italic" fill="#2060c0" font-family="Liberation Serif">f(x)</text></svg>`,
FR(`<circle cx="14.500" cy="14.500" r="5.500" fill="none" stroke="#2060c0" stroke-width="2"/>`),
'sep',
FR(`<path d="M6 12l4-3 4 3 4-3 5 3" stroke="#e02020" stroke-width="1.600" fill="none"/><path d="M6 20l4-3 4 3 4-3 5 3" stroke="#2040c0" stroke-width="1.600" fill="none"/><path d="M6 16l4-3 4 3 4-3 5 3" stroke="#e02020" fill="none"/>`),
`<svg width="34" height="24" viewBox="0 0 34 24"><text x="17" y="18" text-anchor="middle" font-size="16" font-weight="700" fill="#3048b8" font-family="Liberation Sans">RSI</text></svg>`,
`<svg width="28" height="32" viewBox="0 0 28 32"><path d="M14 1l5 6h-10z" fill="#d02020"/><text x="14" y="26" text-anchor="middle" font-size="24" font-weight="700" fill="#d02020" font-family="Liberation Sans">S</text></svg>`,
`<svg width="28" height="28" viewBox="0 0 28 28"><path d="M14 1l5 6h-3v5h5V9l6 5-6 5v-3h-5v5h3l-5 6-5-6h3v-5H7v3l-6-5 6-5v3h5V7H9z" fill="#1a58c0"/></svg>`,
`<svg width="28" height="28" viewBox="0 0 28 28"><path d="M20 3l5 5L10 23l-7 2 2-7z" fill="#f0a020" stroke="#a07020"/><path d="M5 18l5 5-7 2z" fill="#e8d0a0"/><path d="M20 3l5 5-2 2-5-5z" fill="#d06060"/></svg>`,
'sep',
FR(`<text x="14.500" y="20" text-anchor="middle" font-size="15" fill="#2060c0" font-family="Liberation Sans">F5</text>`),
FR(`<path d="M7 13a7 7 0 0 1 13-2l2-2v6h-6l2-2a5 5 0 0 0-9 1z" fill="#40b060"/><path d="M22 16a7 7 0 0 1-13 2l-2 2v-6h6l-2 2a5 5 0 0 0 9-1z" fill="#80c890"/>`),
'1','5','15','30','60','日','周','月','N','多','季','年'];
customElements.define('side-tools',class extends HTMLElement{constructor(){super();
const items=ICONS.map(i=>{
 if(i=='sep')return `<div class="sep"></div>`;
 if(i[0]=='<')return `<div class="it">${i}</div>`;
 return `<div class="it tx${i=='日'?' sel':''}">${i}</div>`;}).join('');
shadow(this,`<style>
:host{display:flex;flex-direction:column;width:37px;height:1325px;flex:none;box-sizing:border-box;background:#f0f0f0;border-left:2px solid #a8a8a8;overflow:hidden}
.w{margin-top:-1px;display:flex;flex-direction:column}
.it{height:34.500px;flex:none;display:flex;align-items:center;justify-content:center}
.tx{color:#2a5aa8;font:18px ${FF}}
.sel{box-sizing:border-box;margin-left:3px;border-left:2px solid #bbb;border-top:2px solid #bbb;background:#f8f8f8;font-size:20px}
.sep{height:13.200px;flex:none;display:flex;align-items:center}
.sep::after{content:"";display:block;margin:0 3px;height:1px;flex:1;background:#aaa;border-bottom:1px solid #fff}
</style><div class="w">${items}</div>`);}});

/* ---------- status bar ---------- */
customElements.define('status-bar',class extends HTMLElement{constructor(){super();
const it=(w,t,c)=>`<span class="${c}" style="width:${w}px">${t}</span>`;
const idx=[[54,'上证','n'],[94,'3255.67','g'],[81,'-13.65','g'],[88,'-0.42%','g'],[93,'3753<u>亿</u>','k'],[56,'沪深','n'],[94,'4156.86','g'],[80,'-44.49','g'],[87,'-1.06%','g'],[97,'2494<u>亿</u>','k'],[54,'创业','n'],[93,'2580.84','g'],[80,'-33.05','g']].map(a=>it(...a)).join('');
shadow(this,`<style>
:host{display:flex;align-items:center;box-sizing:border-box;height:35px;flex:none;background:#f0f0f0;border-top:2px solid #fff;border-bottom:1px solid #456;font:bold 20.800px ${FF};white-space:nowrap}
span{flex:none}
.n{font:400 24px ${FF};color:#333}
.g{color:#108a10}.k{color:#1a1a1a}
u{text-decoration:none;font-weight:400;font-size:23px}
svg{margin:0 3px 0 2px;flex:none}
</style>
<svg width="20" height="20" viewBox="0 0 20 20"><rect width="20" height="20" rx="3" fill="#f2a830"/><rect x="4" y="4" width="12" height="12" fill="#ffe8b0" stroke="#c07810"/><rect x="4" y="9" width="12" height="2" fill="#c07810"/></svg>
${idx}`);}});

/* ---------- IME bar (floats over the chart) ---------- */
customElements.define('ime-bar',class extends HTMLElement{constructor(){super();
shadow(this,`<style>
:host{position:absolute;left:1282px;top:903px;width:157px;height:25px;display:flex;box-sizing:border-box;padding:2px 3px;gap:1px;background:#d4d0c8;border:1px solid #f0eee8;border-right-color:#808080;border-bottom-color:#808080;font:16.500px ${FF};color:#111}
span{display:flex;align-items:center;justify-content:center;box-sizing:border-box;border:1px solid #fff;border-right-color:#808080;border-bottom-color:#808080;flex:none;white-space:nowrap}
</style>
<span style="width:19px;color:#a00000;font:bold 17px 'Liberation Serif',serif">A</span>
<span style="width:70px">极品五笔</span>
<span style="width:20px"><svg width="12" height="14" viewBox="0 0 12 14"><path d="M7 0C10 5 8 11 1 11c2 3 9 3 10-3C12 4 10 1 7 0z" fill="#111"/></svg></span>
<span style="width:18px;font-size:14px;letter-spacing:1px">'&#x2C;</span>
<span style="width:20px"><svg width="16" height="12" viewBox="0 0 16 12"><rect x=".5" y=".5" width="15" height="11" fill="#ddd" stroke="#666"/><path d="M2 3h12M2 6h12M2 9h12" stroke="#555" stroke-dasharray="1.500 1"/></svg></span>`);}});

/* ---------- watermark banner (lies over the bottom of the window) ---------- */
customElements.define('wm-banner',class extends HTMLElement{constructor(){super();
shadow(this,`<style>
:host{position:absolute;left:1080px;top:1286px;width:1080px;height:109px;display:flex;align-items:center;background:#80aad8;overflow:hidden;box-sizing:border-box;padding-left:20px}
.cn{flex:none;margin-top:-5px;font:900 75.500px "Noto Sans CJK SC",sans-serif;color:#1a0c8a;-webkit-text-stroke:1.500px #1a0c8a;white-space:nowrap;line-height:1}
.logo{flex:none;margin-left:33px}
.en{flex:none;margin-left:39px;margin-top:-8px;font:bold 78px "DejaVu Serif",serif;color:#fbfcff;-webkit-text-stroke:1px #fbfcff;white-space:nowrap;transform:scaleX(.886);transform-origin:0 50%;line-height:1}
</style>
<span class="cn">公式指标网</span>
<svg class="logo" width="110" height="108" viewBox="0 0 110 108">
<path d="M11 54 A44 46 0 0 1 46 9" fill="none" stroke="#d96448" stroke-width="11"/>
<path d="M64 9 A44 46 0 0 1 99 54" fill="none" stroke="#d96448" stroke-width="11"/>
<path d="M99 58 A44 46 0 0 1 62 100" fill="none" stroke="#e8c248" stroke-width="11"/>
<path d="M48 100 A44 46 0 0 1 11 58" fill="none" stroke="#d8c070" stroke-width="11" opacity=".55"/>
<path id="wmarc" d="M9 64 A46 46 0 0 0 48 104" fill="none"/>
<text font-size="8" fill="#fff" font-family="Liberation Sans" transform="translate(3 -3)"><textPath href="#wmarc">www.9m8.cn</textPath></text>
<path d="M49 2h12l2 14h10v52H61v30l-6 8-6-8V68H37V16h10z" fill="#e8c44c"/>
<circle cx="55" cy="8" r="2.500" fill="#80aad8"/>
<path d="M37 34h36M45 26v28M65 26v28M37 54h36M45 68l-8 14M65 68l8 14" stroke="#80aad8" stroke-width="3.500" fill="none"/>
</svg>
<span class="en">www.9m8.cn</span>`);}});
</script>
</body></html>
